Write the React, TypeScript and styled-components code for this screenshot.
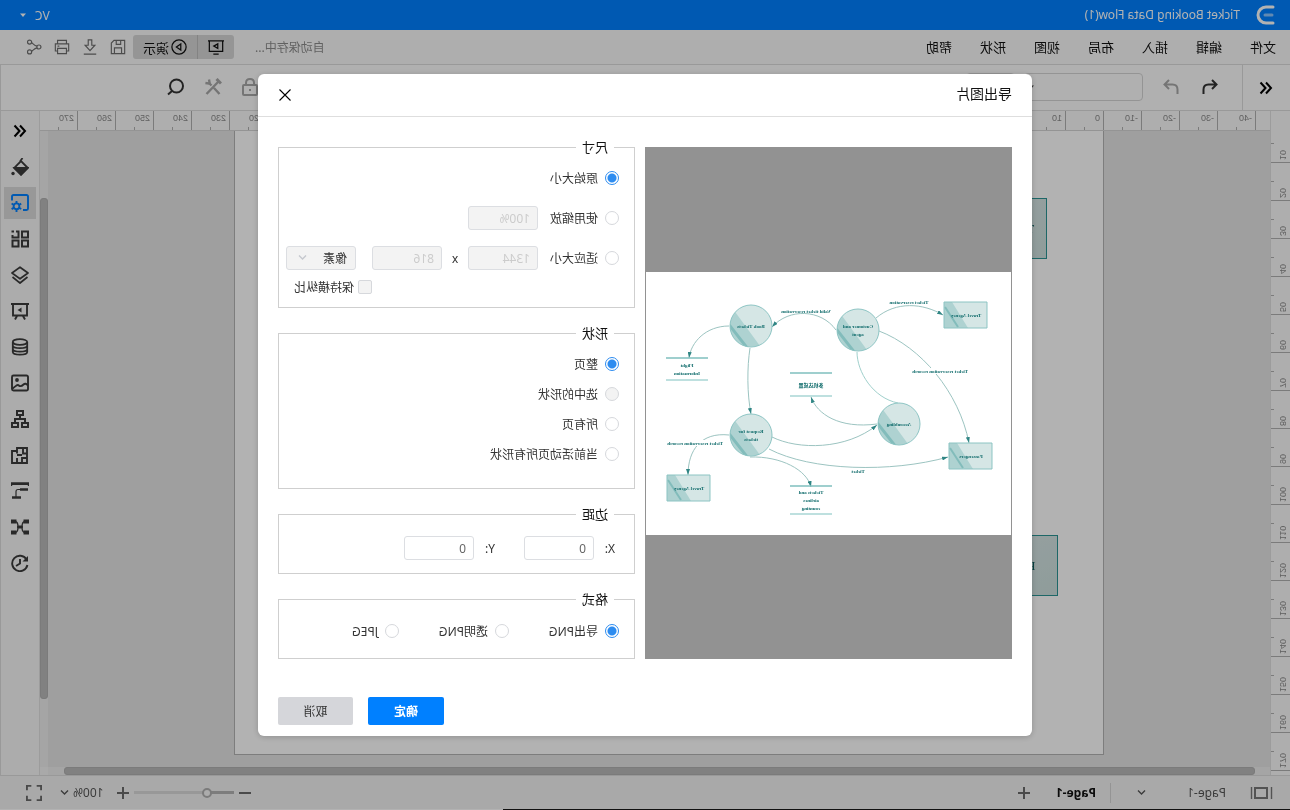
import React from 'react';
import styled, { createGlobalStyle } from 'styled-components';

const GlobalStyle = createGlobalStyle`
  * { box-sizing: border-box; }
  body {
    margin: 0;
    background: #fff;
    font-family: "Noto Sans", "Noto Sans CJK SC", sans-serif;
    font-size: 12px;
    color: #333;
  }
  button, input, select { font: inherit; color: inherit; margin: 0; }
  button { background: none; border: 0; padding: 0; cursor: pointer; }
`;

/* The whole application is shown as a mirror image. */
const Mirror = styled.div`
  position: relative;
  display: flex;
  flex-direction: column;
  min-height: 100vh;
  overflow: hidden;
  transform: scaleX(-1);
`;

const TitleBar = styled.header`
  display: flex;
  align-items: center;
  height: 30px;
  padding: 0 19px 0 14px;
  background: #0080ff;
  color: #fff;
`;
const DocTitle = styled.span`
  margin-left: 16px;
  flex: 1;
  line-height: 20px;
`;
const Account = styled.button`
  display: flex;
  align-items: center;
  gap: 8px;
  color: #fff;
`;

const MenuBar = styled.nav`
  display: flex;
  align-items: center;
  height: 35px;
  padding: 0 26px 0 14px;
  border-bottom: 1px solid #dcdcdc;
  background: #fafafa;
`;
const MenuItems = styled.div`
  display: flex;
  gap: 28px;
  flex: 1;
`;
const MenuItem = styled.button`
  font-size: 13px;
  line-height: 20px;
  color: #111;
`;
const SaveState = styled.span`
  color: #8c8c8c;
  margin-right: 21px;
`;
const PresentGroup = styled.div`
  display: flex;
  height: 24px;
  border-radius: 3px;
  background: #d6d6d6;
  margin-right: 7px;
`;
const PresentButton = styled.button<{ $divided?: boolean }>`
  display: flex;
  align-items: center;
  justify-content: center;
  gap: 2px;
  padding: 0 10px;
  font-size: 13px;
  color: #111;
  border-right: ${(p) => (p.$divided ? '1px solid #bcbcbc' : '0')};
`;
const FileActions = styled.div`
  display: flex;
  gap: 12px;
`;
const IconButton = styled.button<{ $muted?: boolean }>`
  display: flex;
  color: ${(p) => (p.$muted ? '#a8a8a8' : '#333')};
`;
const FileAction = styled(IconButton)`
  color: #6e6e6e;
`;
const StatusIcon = styled(IconButton)`
  color: #6a6a6a;
`;

const ToolBar = styled.div`
  display: flex;
  align-items: center;
  height: 46px;
  border-bottom: 1px solid #dcdcdc;
  border-right: 1px solid #dcdcdc;
  padding: 0 166px 1px 0;
  background: #fdfdfd;
`;
const CollapseCell = styled.div`
  display: flex;
  align-items: center;
  align-self: stretch;
  width: 48px;
  margin-bottom: -1px;
  padding-left: 17px;
  border-right: 1px solid #dcdcdc;
`;
const UndoGroup = styled.div`
  display: flex;
  gap: 21px;
  margin: 0 19px 0 23px;
`;
const ToolPicker = styled.div`
  position: relative;
  margin-right: 9px;
  svg { position: absolute; right: 3px; top: 10px; }
`;
const ToolSelect = styled.select<{ $wide?: boolean }>`
  appearance: none;
  display: block;
  width: ${(p) => (p.$wide ? '119px' : '49px')};
  height: 28px;
  border: 1px solid #d4d4d4;
  border-radius: 4px;
  background: #fdfdfd;
`;
const ToolGroup = styled.div`
  display: flex;
  gap: 19px;
  margin-left: auto;
`;

const Work = styled.main`
  display: flex;
  flex: 1;
  min-height: 664px;
`;
const SideRuler = styled.svg`
  flex: none;
  width: 20px;
  background: #fafafa;
  border-right: 1px solid #e0e0e0;
`;
const Stage = styled.div`
  flex: 1;
  min-width: 0;
  display: grid;
  grid-template-columns: minmax(0, 1fr) 8px;
  grid-template-rows: 20px minmax(0, 1fr) 8px;
`;
const TopRuler = styled.svg`
  grid-column: 1 / 3;
  width: 100%;
  height: 20px;
  background: #fafafa;
  border-bottom: 1px solid #d4d4d4;
`;
const Canvas = styled.div`
  position: relative;
  overflow: hidden;
  background: #e4e4e4;
  padding: 0 186px 12px 166px;
`;
const Paper = styled.div`
  height: 100%;
  border: 1px solid #b4b4b4;
  border-top: 0;
  background: #fff;
`;
const CanvasNode = styled.div<{ $x: number; $y: number }>`
  position: absolute;
  left: ${(p) => p.$x}px;
  top: ${(p) => p.$y}px;
  width: 102px;
  height: 61px;
  line-height: 60px;
  text-align: center;
  font-family: "Liberation Serif", serif;
  font-size: 13px;
  border: 1px solid #2a9494;
  background: linear-gradient(200deg, #d8e6e6, #cde0de);
  color: #0b5d5d;
`;
const ScrollTrack = styled.div<{ $horizontal?: boolean }>`
  display: flex;
  background: #ececec;
  padding: ${(p) => (p.$horizontal ? '0 16px 0 15px' : '67px 0 68px')};
`;
const ScrollThumb = styled.div`
  flex: 1;
  border-radius: 3px;
  background: #b9b9b9;
  border: 1px solid #b0b0b0;
`;
const ScrollCorner = styled.div`
  background: #f2f2f2;
`;

const SideBar = styled.aside`
  display: flex;
  flex-direction: column;
  align-items: center;
  gap: 4px;
  width: 40px;
  padding-top: 4px;
  border-left: 1px solid #e0e0e0;
  border-right: 1px solid #dcdcdc;
  background: #f6f6f6;
`;
const SideTab = styled.button<{ $active?: boolean }>`
  display: flex;
  align-items: center;
  justify-content: center;
  width: 32px;
  height: 32px;
  color: ${(p) => (p.$active ? '#0080ff' : '#3c3c3c')};
  background: ${(p) => (p.$active ? '#dadada' : 'transparent')};
`;

const StatusBar = styled.footer`
  display: flex;
  align-items: center;
  height: 34px;
  padding: 0 26px 0 17px;
  border-top: 1px solid #dcdcdc;
  background: #f3f3f3;
`;
const PagePicker = styled.button`
  display: flex;
  align-items: center;
  justify-content: space-between;
  width: 116px;
  margin-left: 24px;
  padding-right: 26px;
  height: 20px;
  border-right: 1px solid #d4d4d4;
  color: #555;
`;
const PageTab = styled.button`
  margin: 0 26px 0 14px;
  font-weight: 700;
  color: #111;
`;
const ZoomGroup = styled.div`
  display: flex;
  align-items: center;
  margin-left: auto;
`;
const ZoomSlider = styled.input`
  appearance: none;
  width: 100px;
  height: 12px;
  margin: 0 5px;
  background: linear-gradient(90deg, #b4b4b4 27%, #dadada 27%) center / 100% 3px no-repeat;
  &::-webkit-slider-thumb {
    appearance: none;
    width: 10px;
    height: 10px;
    border: 2px solid #b0b0b0;
    border-radius: 50%;
    background: #f6f6f6;
  }
`;
const ZoomLevel = styled.button`
  display: flex;
  align-items: center;
  gap: 4px;
  margin: 0 18px 0 13px;
  color: #555;
`;
const ScreenEdge = styled.div`
  position: relative;
  height: 1px;
  background: linear-gradient(90deg, #111 61%, #b2b2b2 61%);
`;

const Overlay = styled.div`
  position: absolute;
  inset: 0;
  display: flex;
  align-items: flex-start;
  justify-content: center;
  padding-top: 74px;
  background: rgba(0, 0, 0, 0.3);
`;
const Dialog = styled.section`
  width: 60%;
  min-width: 700px;
  border-radius: 6px;
  background: #fff;
  box-shadow: 0 1px 6px rgba(0, 0, 0, 0.2);
`;
const DialogHeader = styled.header`
  display: flex;
  align-items: center;
  justify-content: space-between;
  height: 43px;
  padding: 0 21px 0 20px;
  border-bottom: 1px solid #dedede;
`;
const DialogTitle = styled.h1`
  margin: 0;
  font-size: 14px;
  line-height: 20px;
  padding-bottom: 2px;
  font-weight: 400;
  color: #111;
`;
const DialogBody = styled.div`
  display: grid;
  grid-template-columns: minmax(0, 367fr) minmax(0, 357fr);
  gap: 10px;
  padding: 19px 20px 0;
`;
const Preview = styled.div`
  display: flex;
  align-items: center;
  margin-top: 11px;
  padding: 0 1px;
  background: #929292;
  svg { display: block; width: 100%; background: #fff; }
`;
const Options = styled.form`
  display: flex;
  flex-direction: column;
  gap: 14px;
`;
const Group = styled.fieldset<{ $top?: number; $bottom: number }>`
  min-width: 0;
  margin: 0;
  padding: ${(p) => p.$top ?? 0}px 7px ${(p) => p.$bottom}px 15px;
  border: 1px solid #cfcfcf;
`;
const GroupName = styled.legend`
  margin-left: 5px;
  padding: 0 6px;
  font-size: 13px;
  line-height: 22px;
  color: #111;
`;
const Row = styled.div<{ $h: number; $end?: boolean }>`
  display: flex;
  align-items: center;
  justify-content: ${(p) => (p.$end ? 'flex-end' : 'flex-start')};
  height: ${(p) => p.$h}px;
`;
const RadioLabel = styled.label<{ $w?: number }>`
  display: flex;
  align-items: center;
  gap: 7px;
  width: ${(p) => (p.$w ? `${p.$w}px` : 'auto')};
  white-space: nowrap;
`;
const Radio = styled.input`
  appearance: none;
  flex: none;
  width: 14px;
  height: 14px;
  border: 1px solid #d6d8dc;
  border-radius: 50%;
  background: #fff;
  &:checked {
    border-color: #2d8cf0;
    background: radial-gradient(circle, #2d8cf0 4px, #fff 5px);
  }
  &:disabled { background: #f3f3f3; }
`;
const Check = styled(Radio)`
  border-radius: 2px;
`;
const CheckLabel = styled.label`
  display: flex;
  align-items: center;
  gap: 4px;
  padding: 0 8px 2px 0;
`;
const Field = styled.input`
  width: 70px;
  height: 24px;
  padding: 0 7px;
  border: 1px solid #dcdee2;
  border-radius: 3px;
  background: #fff;
  color: #666;
  &:disabled { background: #f3f3f3; color: #ccc; }
`;
const Times = styled.span`
  width: 26px;
  text-align: center;
`;
const UnitBox = styled.div`
  position: relative;
  margin-left: auto;
  svg { position: absolute; left: 49px; top: 7px; color: #c5c8ce; }
`;
const UnitSelect = styled.select`
  appearance: none;
  display: block;
  width: 70px;
  height: 24px;
  padding: 0 8px;
  border: 1px solid #dcdee2;
  border-radius: 3px;
  background: #f3f3f3;
  color: #333;
  opacity: 1;
`;
const AxisLabel = styled.label`
  display: flex;
  align-items: center;
  justify-content: space-between;
  width: 91px;
  margin: 0 25px 0 4px;
`;
const DialogFooter = styled.footer`
  display: flex;
  justify-content: flex-end;
  gap: 15px;
  padding: 38px 20px 11px;
`;
const ActionButton = styled.button<{ $primary?: boolean }>`
  width: ${(p) => (p.$primary ? 76 : 75)}px;
  height: 28px;
  border-radius: 2px;
  background: ${(p) => (p.$primary ? '#0080ff' : '#d5d6da')};
  color: ${(p) => (p.$primary ? '#fff' : '#333')};
  font-weight: ${(p) => (p.$primary ? 700 : 400)};
`;

type IconProps = { size?: number; w?: number; children: React.ReactNode };
const Icon = ({ size = 18, w = 2, children }: IconProps) => (
  <svg width={size} height={size} viewBox="0 0 18 18" fill="none" stroke="currentColor" strokeWidth={w} aria-hidden="true">
    {children}
  </svg>
);

const DoubleChevron = () => (
  <svg width="14" height="14" viewBox="0 0 14 14" fill="none" stroke="#000" strokeWidth="2" aria-hidden="true">
    <path d="M7 1.5 2 7l5 5.5M12.5 1.5 7.5 7l5 5.5" />
  </svg>
);
const Chevron = ({ size = 9 }: { size?: number }) => (
  <svg width={size} height={size} viewBox="0 0 9 9" fill="none" stroke="currentColor" strokeWidth="1.4" aria-hidden="true">
    <path d="M1 2.5 4.5 6 8 2.5" />
  </svg>
);
const Caret = ({ fill }: { fill: string }) => (
  <svg width="8" height="8" viewBox="0 0 8 8" aria-hidden="true"><path d="M1 2.5h6L4 6z" fill={fill} /></svg>
);
const Plus = () => (
  <svg width="12" height="12" viewBox="0 0 12 12" stroke="currentColor" strokeWidth="2" aria-hidden="true"><path d="M0 6h12M6 0v12" /></svg>
);
const Minus = () => (
  <svg width="12" height="12" viewBox="0 0 12 12" stroke="currentColor" strokeWidth="2" aria-hidden="true"><path d="M0 6h12" /></svg>
);

const sideTabs: { name: string; icon: React.ReactNode }[] = [
  { name: 'fill', icon: <Icon w={1.8}><path d="M6.5 0 9 3.500M1.200 10 8 3l6.800 7L8 16.800Z" /><path d="M1.500 10h13L8 16.500Z" fill="currentColor" /><circle cx="16" cy="15.500" r="1.700" fill="currentColor" stroke="none" /></Icon> },
  { name: 'page', icon: <Icon w={1.9}><path d="M17 6.500V2.500q0-1.500-1.500-1.500H2.500Q1 1 1 2.500v12Q1 16 2.500 16H6" /><circle cx="12.500" cy="12.300" r="2.900" /><path d="M12.500 7v2M12.500 15.500v2.500M7.800 9.600l2 1.200M15.400 13.900l2 1.200M7.800 15l2-1.200M15.400 10.700l2-1.200" /></Icon> },
  { name: 'library', icon: <Icon w={2}><path d="M1 1.500h6v6H1zM1 10.500h6v6H1zM10.500 10.500h6v6h-6zM13 1.500h-2.500v6h6V5M15 1.500h2.500" /></Icon> },
  { name: 'layers', icon: <Icon w={1.7}><path d="M9 1.200 17 7l-8 5.800L1 7ZM1.500 11 9 17l7.500-6" strokeLinejoin="round" /></Icon> },
  { name: 'slides', icon: <Icon w={1.9}><path d="M0 2h18M2 2v11.500h14V2M6 14l-2 3.500M12 14l2 3.500" /><path d="M7.500 5.500v5l4-2.500z" fill="currentColor" stroke="none" /></Icon> },
  { name: 'data', icon: <Icon w={1.8}><ellipse cx="9" cy="4" rx="7.200" ry="2.800" /><path d="M1.800 4v10c0 3.600 14.400 3.600 14.400 0V4M1.800 7.500c0 3.600 14.400 3.600 14.400 0M1.800 11c0 3.600 14.400 3.600 14.400 0" /></Icon> },
  { name: 'image', icon: <Icon w={1.9}><rect x="1" y="1.500" width="16" height="15" rx="1.500" /><circle cx="12" cy="6" r="1.900" fill="currentColor" stroke="none" /><path d="M1 11.500Q3.500 8.500 5.500 10.500T9.500 12q1.500-1.500 3-.5t4.500 3.500" /></Icon> },
  { name: 'org chart', icon: <Icon w={2}><path d="M6 1h6v4H6zM1 13h6v4H1zM11 13h6v4h-6zM9 5v4M4 12V9h10v3" /></Icon> },
  { name: 'floor plan', icon: <Icon w={1.9}><path d="M2 2h10v3h5v12H2zM2 7.500h4V2M7 17v-5H2M12 4.500v3M12 17v-5M7 9h5" /></Icon> },
  { name: 'gantt', icon: <Icon w={2.6}><path d="M0 1.600h18M1 7.500h8M8 15.500h9" /><path d="M.6 1v3M17.400 1v3M9 7.500h2q2 0 2 2v6" strokeWidth="1.200" /></Icon> },
  { name: 'mind map', icon: <Icon w={1.3}><path d="M4 3.500q3 0 3 5.500T4 14.500M14 3.500q-3 0-3 5.500t3 5.500M6 9h6" /><path d="M0 1.500h5.500v4H0zM12.500 1.500H18v4h-5.500zM0 12.500h5.500v4H0zM12.500 12.500H18v4h-5.500zM6.500 7.500h5v3h-5z" fill="currentColor" stroke="none" /></Icon> },
  { name: 'history', icon: <Icon w={1.9}><path d="M2.500 5.500A7.700 7.700 0 1 1 1.600 11M9 5v4.500l4 2.500" /><path d="M1 2v5.500h5.500z" fill="currentColor" stroke="none" /></Icon> },
];

const menus = ['文件', '编辑', '插入', '布局', '视图', '形状', '帮助'];

const hMarks = Array.from({ length: 32 }, (_, i) => i - 4);
const vMarks = Array.from({ length: 17 }, (_, i) => i + 1);

/* Preview diagram parts */
const Ink = '#0f6b6b';
const Caption = ({ x, y, lines }: { x: number; y: number; lines: string[] }) => (
  <text x={x} y={y} textAnchor="middle" fontSize="5" fontWeight="700" fontFamily="Liberation Serif, Noto Sans CJK SC, serif" fill={Ink}>
    {lines.map((l, i) => (
      <tspan key={l} x={x} y={y + 2 + (i * 8) - (lines.length - 1) * 4}>{l}</tspan>
    ))}
  </text>
);
const Disc = ({ x, y, lines }: { x: number; y: number; lines: string[] }) => (
  <>
    <g transform={`translate(${x} ${y})`}>
      <g clipPath="url(#disc)">
        <circle r="21" fill="#d5e6e5" />
        <path d="M18-17-9 20 22 22 22-17Z" fill="#aed2d1" />
        <path d="M24-4 3 23" stroke="#82bcbb" strokeWidth="3" />
      </g>
      <circle r="21" fill="none" stroke="#8cc4c3" />
    </g>
    <Caption x={x} y={y} lines={lines} />
  </>
);
const Box = ({ x, y, label }: { x: number; y: number; label: string }) => (
  <>
    <g transform={`translate(${x} ${y})`}>
      <path d="M0 0H43V26H0Z" fill="#d5e6e5" />
      <path d="M35 0H43V26H19Z" fill="#aed2d1" />
      <path d="M42 5 29 25" stroke="#82bcbb" strokeWidth="2" />
      <path d="M0 0H43V26H0Z" fill="none" stroke="#8cc4c3" />
    </g>
    <Caption x={x + 21} y={y + 13} lines={[label]} />
  </>
);
const Store = ({ x, y, h, lines }: { x: number; y: number; h: number; lines: string[] }) => (
  <>
    <path d={`M${x} ${y}h42`} stroke="#7fbfbe" strokeWidth="1.4" />
    <path d={`M${x} ${y + h}h42`} stroke="#a8d6d4" strokeWidth="1.4" />
    <Caption x={x + 21} y={y + h / 2} lines={lines} />
  </>
);
const links = [
  'M135 46C115 29 88 31 68 43',
  'M132 59C90 75 52 120 42 171',
  'M175 58C190 37 222 36 239 55',
  'M282 54C305 54 320 70 322 86',
  'M261 76C264 95 264 122 260 142',
  'M239 165C213 178 165 178 134 153',
  'M134 152C172 157 194 142 200 125',
  'M242 177C200 199 120 201 63 185',
  'M261 185C230 184 204 198 200 215',
  'M282 163C310 160 323 178 323 203',
];
const Diagram = () => (
  <svg viewBox="0 0 365 263" role="img" aria-label="Ticket booking data flow">
    <defs>
      <clipPath id="disc"><circle r="21" /></clipPath>
      <marker id="tip" viewBox="0 0 6 4" refX="6" refY="2" markerWidth="6" markerHeight="4" orient="auto"><path d="M0 0 6 2 0 4Z" fill="#2f8584" /></marker>
    </defs>
    {links.map((d) => <path key={d} d={d} fill="none" stroke="#9cc4c1" markerEnd="url(#tip)" />)}
    <path d="M154 80C154 100 138 126 113 131" fill="none" stroke="#a0d0cc" />
    <path d="M42 96h58v6H42zM288 168h57v6h-57z" fill="#fff" />
    <Box x={24} y={30} label="Travel Agency" />
    <Box x={19} y={171} label="Passengers" />
    <Box x={301} y={203} label="Travel Agency" />
    <Disc x={153} y={58} lines={['Customer and', 'agent']} />
    <Disc x={260} y={54} lines={['Book Tickets']} />
    <Disc x={260} y={163} lines={['Request for', 'tickets']} />
    <Disc x={112} y={152} lines={['Assembling']} />
    <Store x={303} y={86} h={22} lines={['Flight', 'Information']} />
    <Store x={179} y={101} h={23} lines={['多机达成置']} />
    <Store x={179} y={214} h={28} lines={['Tickets and', 'airlines', 'counting']} />
    <Caption x={102} y={30} lines={['Ticket reservation']} />
    <Caption x={205} y={39} lines={['Valid ticket reservation']} />
    <Caption x={71} y={99} lines={['Ticket reservation records']} />
    <Caption x={316} y={171} lines={['Ticket reservation records']} />
    <Caption x={153} y={199} lines={['Ticket']} />
  </svg>
);

export default function App() {
  return (
    <>
      <GlobalStyle />
      <Mirror>
        <TitleBar>
          <svg width="20" height="20" viewBox="0 0 20 20" fill="none" stroke="#fff" strokeWidth="3" strokeLinecap="round" aria-hidden="true">
            <path d="M3 2h7a8 8 0 0 1 0 16H3" />
            <path d="M4 10h7" stroke="#8cc4ff" />
          </svg>
          <DocTitle>Ticket Booking Data Flow(1)</DocTitle>
          <Account>VC<Caret fill="#fff" /></Account>
        </TitleBar>

        <MenuBar>
          <MenuItems>{menus.map((m) => <MenuItem key={m}>{m}</MenuItem>)}</MenuItems>
          <SaveState>自动保存中...</SaveState>
          <PresentGroup>
            <PresentButton $divided aria-label="slide show">
              <Icon size={16} w={1.4}><path d="M0 2h18M1.500 2v12h15V2M6 17h6" /><path d="M7 5.500v5L11.500 8z" /></Icon>
            </PresentButton>
            <PresentButton>
              <Icon size={16} w={1.4}><circle cx="9" cy="9" r="8" /><path d="M7 5.500v7L12 9z" /></Icon>
              演示
            </PresentButton>
          </PresentGroup>
          <FileActions>
            <FileAction aria-label="save"><Icon size={16} w={1.3}><path d="M1.500 1.500h12l3 3v12h-15zM5 16v-6h8v6M6 2v4h5V2" /></Icon></FileAction>
            <FileAction aria-label="download"><Icon size={16} w={1.3}><path d="M7 1h4v6h3.500L9 13 3.500 7H7zM2 17h14" /></Icon></FileAction>
            <FileAction aria-label="print"><Icon size={16} w={1.3}><path d="M4 5.500v-4h10v4M4 13.500H1.500v-8h15v8H14M4 10.500h10v6H4zM12 8h2" /></Icon></FileAction>
            <FileAction aria-label="share"><Icon size={16} w={1.3}><circle cx="14" cy="3.500" r="2.300" /><circle cx="3.500" cy="9" r="2.300" /><circle cx="14" cy="14.500" r="2.300" /><path d="M5.500 8C9 7.500 10 5 12 4M5.500 10c3.500.5 4.500 3 6.500 4" /></Icon></FileAction>
          </FileActions>
        </MenuBar>

        <ToolBar>
          <CollapseCell><IconButton aria-label="collapse library"><DoubleChevron /></IconButton></CollapseCell>
          <UndoGroup>
            <IconButton aria-label="undo"><Icon><path d="M7 2 2.500 6.500 7 11M3 6.500h7.500q5 0 5 5V16" /></Icon></IconButton>
            <IconButton $muted aria-label="redo"><Icon><path d="M11 2l4.500 4.500L11 11M15 6.500H7.500q-5 0-5 5V16" /></Icon></IconButton>
          </UndoGroup>
          <ToolPicker><ToolSelect $wide aria-label="font" /><Caret fill="#444" /></ToolPicker>
          <ToolPicker><ToolSelect aria-label="font size" /></ToolPicker>
          <ToolGroup>
            <IconButton $muted aria-label="lock"><Icon><rect x="2" y="7" width="14" height="10" rx="1" /><path d="M5 7V5q0-4 4-4t4 4v2M9 11v2" /></Icon></IconButton>
            <IconButton $muted aria-label="tools"><Icon w={2.4}><path d="M3.500 3.500 15.500 16M10.500 7.500 13 5M8 10l-5.500 6" /><path d="M1 5.500 5.500 1" strokeWidth="3" /><path d="M13 1.500 12.300 5.600l4.300-.6" /></Icon></IconButton>
            <IconButton aria-label="search"><Icon><circle cx="8.500" cy="8" r="6.500" /><path d="M13 13l4 3.500" /></Icon></IconButton>
          </ToolGroup>
        </ToolBar>

        <Work>
          <SideRuler aria-hidden="true">
            {vMarks.map((m) => (
              <g key={m} transform={`translate(0 ${13 + m * 38})`}>
                <path d="M0 .5H20M16-18.500H20" stroke="#b0b0b0" />
                <text transform="translate(10 -2) rotate(-90)" fontSize="9" fontFamily="Liberation Sans" fill="#8a8a8a">{m * 10}</text>
              </g>
            ))}
          </SideRuler>
          <Stage>
            <TopRuler aria-hidden="true">
              {hMarks.map((m) => (
                <g key={m} transform={`translate(${166 + m * 38} 0)`}>
                  <path d="M.5 0V20M19.500 16V20" stroke="#b0b0b0" />
                  <text x="4" y="10" fontSize="9" fontFamily="Liberation Sans" fill="#8a8a8a">{m * 10}</text>
                </g>
              ))}
            </TopRuler>
            <Canvas>
              <Paper />
              <CanvasNode $x={223} $y={67}>Travel Agency</CanvasNode>
              <CanvasNode $x={212} $y={404}>Passengers</CanvasNode>
            </Canvas>
            <ScrollTrack><ScrollThumb /></ScrollTrack>
            <ScrollTrack $horizontal><ScrollThumb /></ScrollTrack>
            <ScrollCorner />
          </Stage>
          <SideBar>
            <SideTab aria-label="collapse panel"><DoubleChevron /></SideTab>
            {sideTabs.map((t) => <SideTab key={t.name} aria-label={t.name} $active={t.name === 'page'}>{t.icon}</SideTab>)}
          </SideBar>
        </Work>

        <StatusBar>
          <svg width="23" height="12" viewBox="0 0 23 12" fill="none" stroke="#777" strokeWidth="2" aria-hidden="true">
            <path d="M6 1h12v10H6z" /><path d="M1.500 0v12M21.500 0v12" strokeWidth="1.400" />
          </svg>
          <PagePicker>Page-1<Chevron /></PagePicker>
          <PageTab>Page-1</PageTab>
          <StatusIcon aria-label="add page"><Plus /></StatusIcon>
          <ZoomGroup>
            <StatusIcon aria-label="zoom out"><Minus /></StatusIcon>
            <ZoomSlider type="range" aria-label="zoom" min={0} max={100} defaultValue={24} />
            <StatusIcon aria-label="zoom in"><Plus /></StatusIcon>
            <ZoomLevel>100%<Chevron /></ZoomLevel>
            <StatusIcon aria-label="full screen">
              <Icon size={16} w={2.2}><path d="M1 6V1h5M12 1h5v5M17 12v5h-5M6 17H1v-5" /></Icon>
            </StatusIcon>
          </ZoomGroup>
        </StatusBar>

        <Overlay>
          <Dialog role="dialog" aria-label="导出图片">
            <DialogHeader>
              <DialogTitle>导出图片</DialogTitle>
              <IconButton aria-label="close">
                <svg width="12" height="12" viewBox="0 0 12 12" stroke="#000" strokeWidth="1.1" aria-hidden="true"><path d="M.5.5l11 11M11.500.5l-11 11" /></svg>
              </IconButton>
            </DialogHeader>
            <DialogBody>
              <Preview><Diagram /></Preview>
              <Options>
                <Group $bottom={9}>
                  <GroupName>尺寸</GroupName>
                  <Row $h={40}><RadioLabel><Radio type="radio" name="size" defaultChecked />原始大小</RadioLabel></Row>
                  <Row $h={40}>
                    <RadioLabel $w={81}><Radio type="radio" name="size" />使用缩放</RadioLabel>
                    <Field aria-label="缩放" defaultValue="100%" disabled />
                  </Row>
                  <Row $h={40}>
                    <RadioLabel $w={81}><Radio type="radio" name="size" />适应大小</RadioLabel>
                    <Field aria-label="宽度" defaultValue="1344" disabled />
                    <Times>x</Times>
                    <Field aria-label="高度" defaultValue="816" disabled />
                    <UnitBox>
                      <UnitSelect aria-label="单位" disabled><option>像素</option></UnitSelect>
                      <Chevron />
                    </UnitBox>
                  </Row>
                  <Row $h={20} $end><CheckLabel><Check type="checkbox" disabled />保持横纵比</CheckLabel></Row>
                </Group>
                <Group $top={5} $bottom={19}>
                  <GroupName>形状</GroupName>
                  <Row $h={30}><RadioLabel><Radio type="radio" name="shape" defaultChecked />整页</RadioLabel></Row>
                  <Row $h={30}><RadioLabel><Radio type="radio" name="shape" disabled />选中的形状</RadioLabel></Row>
                  <Row $h={30}><RadioLabel><Radio type="radio" name="shape" />所有页</RadioLabel></Row>
                  <Row $h={30}><RadioLabel><Radio type="radio" name="shape" />当前活动页所有形状</RadioLabel></Row>
                </Group>
                <Group $bottom={2}>
                  <GroupName>边距</GroupName>
                  <Row $h={46}>
                    <AxisLabel>X:<Field defaultValue="0" /></AxisLabel>
                    <AxisLabel>Y:<Field defaultValue="0" /></AxisLabel>
                  </Row>
                </Group>
                <Group $bottom={6}>
                  <GroupName>格式</GroupName>
                  <Row $h={42}>
                    <RadioLabel $w={110}><Radio type="radio" name="format" defaultChecked />导出PNG</RadioLabel>
                    <RadioLabel $w={110}><Radio type="radio" name="format" />透明PNG</RadioLabel>
                    <RadioLabel><Radio type="radio" name="format" />JPEG</RadioLabel>
                  </Row>
                </Group>
              </Options>
            </DialogBody>
            <DialogFooter>
              <ActionButton $primary>确定</ActionButton>
              <ActionButton>取消</ActionButton>
            </DialogFooter>
          </Dialog>
        </Overlay>
        <ScreenEdge />
      </Mirror>
    </>
  );
}
